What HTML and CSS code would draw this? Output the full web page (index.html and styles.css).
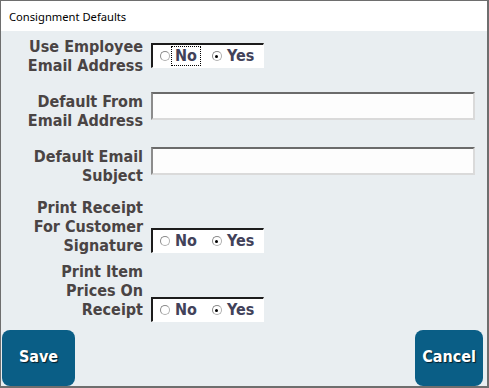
FILE: index.html
```html
<!DOCTYPE html>
<html>
<head>
<meta charset="utf-8">
<title>Consignment Defaults</title>
<link rel="stylesheet" href="styles.css">
</head>
<body>
<div class="window">
  <div class="titlebar">Consignment Defaults</div>
  <div class="content">
    <div class="row row-1">
      <div class="label">Use Employee<br>Email Address</div>
      <div class="radio-group ctl-1">
        <span class="opt"><span class="dot"></span><span class="opt-text focus">No</span></span>
        <span class="opt opt-2"><span class="dot checked"></span><span class="opt-text">Yes</span></span>
      </div>
    </div>
    <div class="row row-2">
      <div class="label">Default From<br>Email Address</div>
      <input class="text-input ctl-2" type="text">
    </div>
    <div class="row row-3">
      <div class="label">Default Email<br>Subject</div>
      <input class="text-input ctl-3" type="text">
    </div>
    <div class="row row-4">
      <div class="label">Print Receipt<br>For Customer<br>Signature</div>
      <div class="radio-group ctl-4">
        <span class="opt"><span class="dot"></span><span class="opt-text">No</span></span>
        <span class="opt opt-2"><span class="dot checked"></span><span class="opt-text">Yes</span></span>
      </div>
    </div>
    <div class="row row-5">
      <div class="label">Print Item<br>Prices On<br>Receipt</div>
      <div class="radio-group ctl-5">
        <span class="opt"><span class="dot"></span><span class="opt-text">No</span></span>
        <span class="opt opt-2"><span class="dot checked"></span><span class="opt-text">Yes</span></span>
      </div>
    </div>
    <div class="footer">
      <button class="btn">Save</button>
      <button class="btn">Cancel</button>
    </div>
  </div>
</div>
</body>
</html>
```
FILE: styles.css
```css
html, body {
  margin: 0;
  padding: 0;
  background: #ffffff;
}
.window {
  width: 489px;
  height: 388px;
  box-sizing: border-box;
  border-style: solid;
  border-color: #6e6e6e;
  border-width: 1px 2px 2px 1px;
  display: flex;
  flex-direction: column;
  overflow: hidden;
}
.titlebar {
  height: 30px;
  flex: none;
  background: #ffffff;
  font-family: "Noto Sans", "Open Sans", sans-serif;
  font-size: 11.2px;
  line-height: 31px;
  color: #000;
  padding-left: 8px;
}
.content {
  flex: 1;
  background: #e9eef1;
  display: flex;
  flex-direction: column;
}
.row {
  display: flex;
  align-items: flex-start;
}
.row-1 { margin-top: 6px; }
.row-2 { margin-top: 17px; }
.row-3 { margin-top: 17px; }
.row-4 { margin-top: 13px; }
.row-5 { margin-top: 7px; }
.label {
  width: 142px;
  flex: none;
  text-align: right;
  font-family: "DejaVu Sans Condensed", "DejaVu Sans", sans-serif;
  font-weight: bold;
  font-size: 16px;
  line-height: 19px;
  color: #4a4444;
}
.ctl-1 { margin-top: 6px; }
.ctl-2 { margin-top: 8px; }
.ctl-3 { margin-top: 4px; }
.ctl-4 { margin-top: 30px; }
.ctl-5 { margin-top: 35px; }
.radio-group {
  margin-left: 8px;
  width: 113px;
  height: 25px;
  box-sizing: border-box;
  background: #ffffff;
  border-style: solid;
  border-color: #1c1c1c #ffffff #ffffff #1c1c1c;
  border-width: 2px 1px 1px 2px;
  display: flex;
  align-items: center;
  padding-left: 7px;
}
.opt {
  display: flex;
  align-items: center;
}
.opt-2 { margin-left: 11px; }
.dot {
  width: 10px;
  height: 10px;
  box-sizing: border-box;
  border-radius: 50%;
  border: 1px solid #b0b0b0;
  border-top-color: #8a8a8a;
  border-left-color: #8a8a8a;
  background: #ffffff;
  position: relative;
}
.dot.checked::after {
  content: "";
  position: absolute;
  left: 2.5px;
  top: 2.5px;
  width: 3px;
  height: 3px;
  border-radius: 50%;
  background: #000;
}
.opt-text {
  margin-left: 1px;
  padding: 0 3px;
  border: 1px dotted transparent;
  font-family: "DejaVu Sans Condensed", "DejaVu Sans", sans-serif;
  font-weight: bold;
  font-size: 16px;
  line-height: 18px;
  color: #42425a;
}
.opt-text.focus {
  border-color: #000;
}
.text-input {
  margin: 0 0 0 8px;
  width: 324px;
  height: 28px;
  box-sizing: border-box;
  background: #fdfdfd;
  border-style: solid;
  border-width: 2px;
  border-color: #6b6b6b #dadada #dadada #8c8c8c;
  padding: 0 4px;
  outline: none;
}
.footer {
  margin-top: auto;
  display: flex;
  justify-content: space-between;
  padding: 0 4px 0 1px;
}
.btn {
  border: none;
  border-radius: 8px;
  background: #0a5e86;
  color: #ffffff;
  font-family: "DejaVu Sans Condensed", "DejaVu Sans", sans-serif;
  font-weight: bold;
  font-size: 16px;
  text-shadow: 1px 1px 1px rgba(0, 0, 0, 0.7);
  height: 56px;
  padding: 0 0 3px 0;
  width: 73px;
}
.btn + .btn {
  width: 68px;
}
```
